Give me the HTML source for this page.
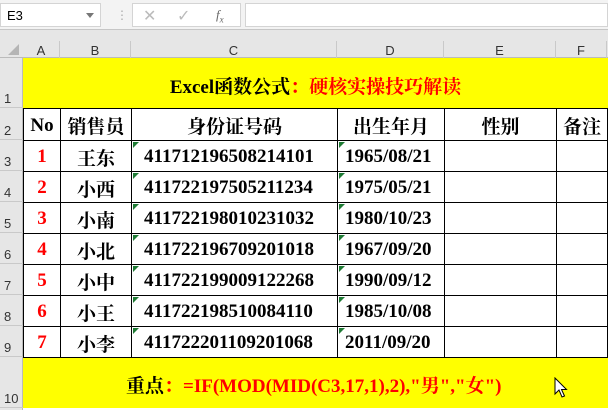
<!DOCTYPE html>
<html><head><meta charset="utf-8"><style>
body{margin:0;width:608px;height:410px;overflow:hidden;background:#fff;font-family:"Liberation Sans",sans-serif;position:relative}
.a{position:absolute;box-sizing:border-box}
.s{font-family:"Liberation Serif","Noto Serif CJK SC",serif;font-weight:bold}
.c{display:flex;align-items:center;justify-content:center}
.rh{font-size:13px;color:#333;display:flex;align-items:flex-end;padding-left:4px;padding-bottom:1px}
.tri{position:absolute;left:1px;top:1px;width:0;height:0;border-top:6px solid #1e7b34;border-right:6px solid transparent}
</style></head><body>
<div class="a" style="left:0;top:0;width:608px;height:30px;background:#f3f3f3;border-bottom:1px solid #c6c6c6"></div>
<div class="a" style="left:0;top:3px;width:101px;height:24px;background:#fff;border:1px solid #d4d4d4;font-size:13px;padding:4px 6px">E3</div>
<div class="a" style="left:86px;top:13px;border-top:5px solid #777;border-left:4px solid transparent;border-right:4px solid transparent"></div>
<div class="a" style="left:116px;top:8px;color:#aaa;font-size:12px">⋮</div>
<div class="a" style="left:132px;top:3px;width:109px;height:24px;background:#fff;border:1px solid #d4d4d4"></div>
<div class="a" style="left:143px;top:6px;color:#bbb;font-size:16px">✕</div>
<div class="a" style="left:177px;top:6px;color:#bbb;font-size:16px">✓</div>
<div class="a" style="left:216px;top:7px;color:#666;font-size:13px;font-style:italic;font-family:'Liberation Serif',serif">f<sub style="font-size:9px">x</sub></div>
<div class="a" style="left:245px;top:3px;width:363px;height:24px;background:#fff;border:1px solid #d4d4d4"></div>
<div class="a" style="left:0;top:30px;width:608px;height:28px;background:#e6e6e6;border-bottom:1px solid #bbb"></div>
<div class="a" style="left:8px;top:44px;border-bottom:11px solid #b5b5b5;border-left:11px solid transparent"></div>
<div class="a" style="left:0;top:58px;width:23px;height:352px;background:#e6e6e6;border-right:1px solid #bbb"></div>
<div id="g"></div>
<script>
var cols=[23,60,131,337,444,556,607],names="ABCDEF";
var h='';
for(var i=0;i<6;i++){h+='<div class="a c" style="left:'+cols[i]+'px;top:41px;width:'+(cols[i+1]-cols[i])+'px;height:18px;font-size:13px;color:#333;border-right:1px solid #c9c9c9">'+names[i]+'</div>';}
var rows=[58,108,140,171,202,233,264,295,326,357,408];
for(var r=0;r<10;r++){h+='<div class="a rh" style="left:0;top:'+rows[r]+'px;width:23px;height:'+(rows[r+1]-rows[r])+'px;border-bottom:1px solid #c9c9c9">'+(r+1)+'</div>';}
h+='<div class="a c s" style="left:23px;top:58px;width:585px;height:50px;background:#ff0;font-size:19px;padding-top:4px"><span>Excel函数公式<span style="color:#f00">：硬核实操技巧解读</span></span></div>';
h+='<div class="a s" style="left:23px;top:357px;width:585px;height:51px;background:#ff0;font-size:19px;padding:14px 0 0 103px"><span>重点<span style="color:#f00">：=IF(MOD(MID(C3,17,1),2),"男","女")</span></span></div>';
var data=[["No","销售员","身份证号码","出生年月","性别","备注"],["1","王东","411712196508214101","1965/08/21"],["2","小西","411722197505211234","1975/05/21"],["3","小南","411722198010231032","1980/10/23"],["4","小北","411722196709201018","1967/09/20"],["5","小中","411722199009122268","1990/09/12"],["6","小王","411722198510084110","1985/10/08"],["7","小李","411722201109201068","2011/09/20"]];
for(var r=0;r<8;r++){for(var c=0;c<6;c++){var t=data[r][c]||'';var st='left:'+cols[c]+'px;top:'+rows[r+1]+'px;width:'+(cols[c+1]-cols[c]+1)+'px;height:'+(rows[r+2]-rows[r+1]+1)+'px;border:1.5px solid #000;font-size:19px;padding-top:2px;';
if(r>0&&c==0)st+='color:#f00;';
if(r>0&&c==2){st+='justify-content:flex-start;padding-left:12px;';}
if(r>0&&c==3){st+='justify-content:flex-start;padding-left:7px;';}
h+='<div class="a c s" style="'+st+'">'+(r>0&&(c==2||c==3)?'<div class="tri"></div>':'')+t+'</div>';}}
h+='<svg class="a" style="left:554px;top:377px" width="14" height="22" viewBox="0 0 14 22"><path d="M1 1 L1 17 L5 13 L8 20 L10.5 19 L7.5 12.5 L12.5 12.5 Z" fill="#fff" stroke="#000" stroke-width="1"/></svg>';
document.getElementById('g').innerHTML=h;
</script>
</body></html>
